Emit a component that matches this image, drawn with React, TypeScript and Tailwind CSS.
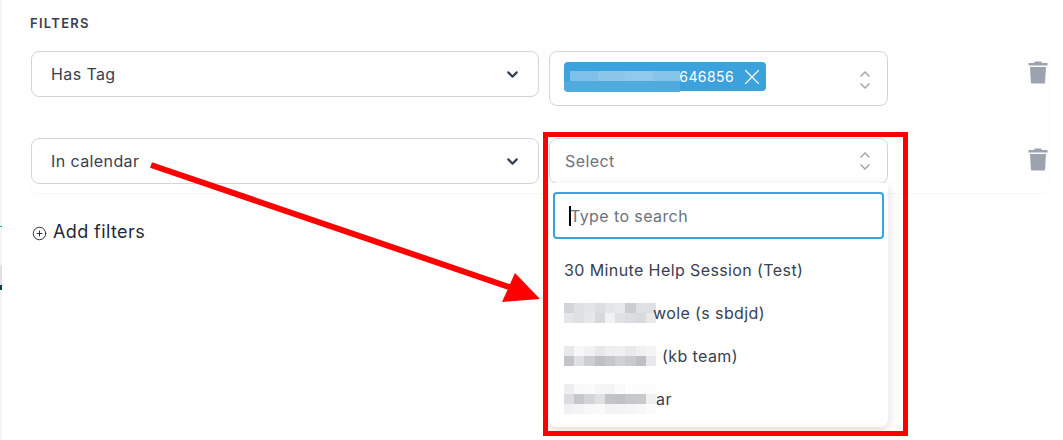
import { ChevronDown, CirclePlus, X } from 'lucide-react';

const MOSAIC_ROWS = {
  wole: [
    ['#d3d4d8', '#e0e1e4', '#e3e4e6', '#dcdde0', '#e4e5e7', '#e8e9ea', '#cccdd1', '#dfe0e3', '#dedfe2'],
    ['#e4e5e7', '#dfe0e3', '#e6e7e9', '#d8d9dd', '#f1f2f2', '#e0e1e4', '#dcdde0', '#d9dade', '#e8e9ea'],
  ],
  team: [
    ['#e8e9ea', '#f7f7f8', '#f1f1f2', '#e8e8ea', '#efeff0', '#f0f0f1', '#e9e9eb', '#f0f0f1', '#f4f4f5'],
    ['#c3c4c8', '#dfe0e3', '#cdced2', '#bfc0c5', '#c6c7cb', '#d0d1d4', '#c9cace', '#bfc0c5', '#e9e9eb'],
  ],
  calendar: [
    ['#eeeeef', '#f9f9f9', '#fbfbfb', '#f5f5f6', '#f4f4f5', '#fbfbfb', '#fdfdfd', '#fcfcfc', '#fcfcfc'],
    ['#dcdde0', '#c6c7cb', '#d3d4d7', '#dfe0e2', '#c3c4c8', '#c0c1c5', '#c7c8cc', '#c8c9cd', '#f0f0f1'],
    ['#f1f1f2', '#f4f4f5', '#f8f8f8', '#f9f9f9', '#f3f3f4', '#f4f4f5', '#f5f5f6', '#f7f7f7', '#fbfbfb'],
  ],
};

function Mosaic({ rows }: { rows: string[][] }) {
  return (
    <span className="flex w-[92px] shrink-0 flex-col">
      {rows.map((row, i) => (
        <span key={i} className="flex h-[10px]">
          {row.map((color, j) => (
            <span key={j} className="flex-1" style={{ backgroundColor: color }} />
          ))}
        </span>
      ))}
    </span>
  );
}

function TrashIcon() {
  return (
    <svg viewBox="0 0 20 24" className="h-[24px] w-[20px] fill-[#9ca3af]" aria-hidden>
      <path d="M7 1.5h6l1 1.6h5.5V5.4H.5V3.1H6z" />
      <path d="M2 7h16l-.9 15.2c-.1.8-.6 1.3-1.4 1.3H4.3c-.8 0-1.3-.5-1.4-1.3z" />
    </svg>
  );
}

function FilterSelect({ label }: { label: string }) {
  return (
    <div className="flex h-[46px] w-[508px] shrink-0 items-center justify-between rounded-lg border border-[#d1d5db] pr-[17px] pl-[19px] text-[#374151]">
      <span>{label}</span>
      <ChevronDown className="h-[17px] w-[17px] text-[#374151]" strokeWidth={3} />
    </div>
  );
}

function UpDown() {
  return (
    <svg viewBox="0 0 10 18" className="h-[18px] w-[10px] fill-none stroke-[#9ca3af] stroke-[1.4]" aria-hidden>
      <path d="M.6 5.6 5 1l4.4 4.6" />
      <path d="M.6 12.4 5 17l4.4-4.6" />
    </svg>
  );
}

export default function App() {
  return (
    <div className="relative h-[440px] w-[1063px] overflow-hidden bg-white font-['Inter',sans-serif] text-base tracking-[0.4px]">
      <div className="absolute top-0 left-0 h-full w-[2px] bg-[#f3f4f6]">
        <div className="absolute top-[226px] h-px w-full bg-[#10b981]" />
        <div className="absolute top-[265px] h-[25px] w-full bg-[#dfe1e8]" />
        <div className="absolute top-[285px] h-[5px] w-full bg-[#123a4a]" />
      </div>

      <div className="w-[1018px] pt-[16px] pl-[30px]">
        <h3 className="text-[13px] leading-[15px] font-semibold tracking-[1.3px] text-[#374151] uppercase">Filters</h3>
        <div className="mt-[20px] h-[142px] w-[1018px] rounded-lg shadow-[0_1px_2px_rgba(0,0,0,0.04)]">
          <div className="flex items-start pl-px">
            <FilterSelect label="Has Tag" />
            <div className="ml-[10px] flex h-[55px] w-[339px] items-start justify-between rounded-lg border border-[#d1d5db] pt-[10px] pr-[17px] pl-[14px]">
              <div className="relative flex h-[29px] w-[202px] items-center justify-end rounded bg-[#3ba2dd] pr-px text-sm text-white">
                <span className="absolute top-[9px] left-[6px] flex h-[10px] w-[110px]">
                  <span className="flex-1 bg-[#7fc0e8]" />
                  <span className="flex-1 bg-[#8cc7ea]" />
                  <span className="flex-1 bg-[#90c9eb]" />
                  <span className="flex-1 bg-[#85c3e9]" />
                </span>
                <span className="absolute top-[19px] left-0 h-[11px] w-[116px] rounded-bl bg-[#4faade]" />
                <span>646856</span>
                <X className="ml-[5px] h-[26px] w-[26px]" strokeWidth={1.1} />
              </div>
              <div className="pt-[9px]">
                <UpDown />
              </div>
            </div>
            <div className="ml-auto pt-[9px]">
              <TrashIcon />
            </div>
          </div>
          <div className="mt-[32px] flex items-start pl-px">
            <FilterSelect label="In calendar" />
            <div className="ml-[10px] flex h-[46px] w-[339px] items-center justify-between rounded-lg border border-[#d1d5db] pr-[17px] pl-[15px] text-[#6b7280]">
              <span>Select</span>
              <UpDown />
            </div>
            <div className="ml-auto pt-[9px]">
              <TrashIcon />
            </div>
          </div>
        </div>
        <div className="mt-[27px] flex items-center gap-[6px] pl-[2px] text-lg leading-[24px] text-[#1f2937]">
          <CirclePlus className="mt-[2px] h-[15px] w-[15px]" strokeWidth={1.5} />
          <span>Add filters</span>
        </div>
      </div>

      {/* open dropdown */}
      <div className="absolute top-[183px] left-[549px] h-[244px] w-[339px] rounded-b-lg bg-white pt-[9px] shadow-[0_4px_12px_rgba(0,0,0,0.14)]">
        <div className="mx-[4px] flex h-[47px] items-center rounded border-2 border-[#3ba2dd] pl-[14px] text-[#6b7280]">
          <span className="mr-[-1px] h-[20px] w-[2px] bg-black" />
          <span>Type to search</span>
        </div>
        <ul className="mt-[9px] text-[#374151]">
          <li className="flex h-[43px] items-center pl-[15px]">30 Minute Help Session (Test)</li>
          <li className="flex h-[43px] items-center pl-[15px]">
            <Mosaic rows={MOSAIC_ROWS.wole} />
            <span className="ml-[-3px]">wole (s sbdjd)</span>
          </li>
          <li className="flex h-[43px] items-center pl-[15px]">
            <Mosaic rows={MOSAIC_ROWS.team} />
            <span className="ml-[6px]">(kb team)</span>
          </li>
          <li className="flex h-[43px] items-center pl-[15px]">
            <Mosaic rows={MOSAIC_ROWS.calendar} />
            <span>ar</span>
          </li>
        </ul>
      </div>

      {/* annotation */}
      <div className="absolute top-[132px] left-[543px] h-[304px] w-[365px] border-[5px] border-[#ff0000]" />
      <svg className="absolute inset-0 h-full w-full" viewBox="0 0 1063 440" aria-hidden>
        <line x1="151" y1="165" x2="515" y2="289" stroke="#ff0000" strokeWidth="6" />
        <polygon points="540,299 502,302 515,273" fill="#ff0000" />
      </svg>
    </div>
  );
}
